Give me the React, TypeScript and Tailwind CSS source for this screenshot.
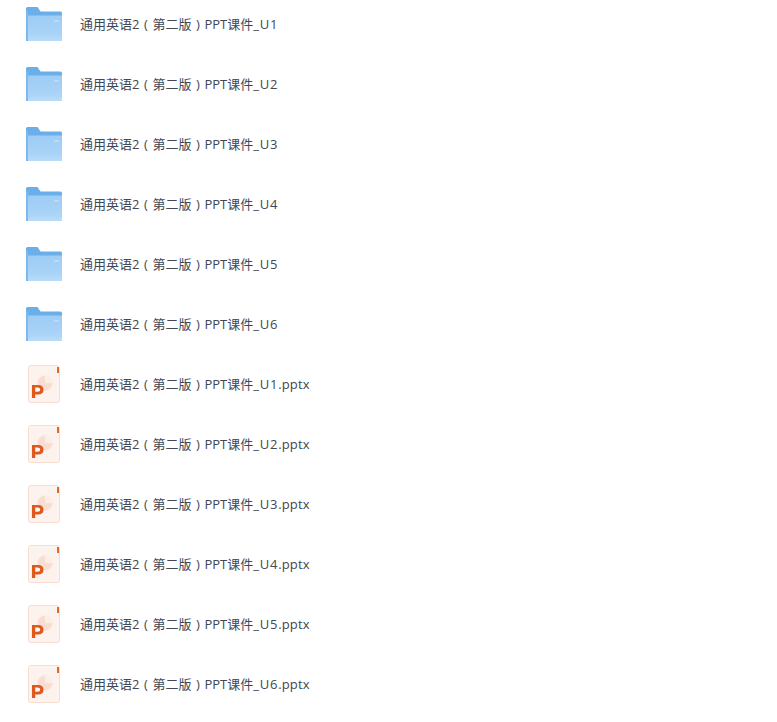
const folders = ['U1', 'U2', 'U3', 'U4', 'U5', 'U6'];

const FolderIcon = ({ id }: { id: string }) => (
  <svg width="36" height="34" viewBox="0 0 36 34" className="shrink-0">
    <defs>
      <linearGradient id={id} x1="0" y1="0" x2="0" y2="1">
        <stop offset="0" stopColor="#9dccf5" />
        <stop offset="0.7" stopColor="#a9d3f7" />
        <stop offset="1" stopColor="#b9dcf9" />
      </linearGradient>
    </defs>
    <path d="M0 1.5Q0 0 1.5 0H11.5L14.5 4.5H34.5Q36 4.5 36 6V12H0Z" fill="#6aaeea" />
    <path d="M0 4H2V34H0Z" fill="#7db9ee" />
    <path d="M2 8.5H36V34H2Z" fill={`url(#${id})`} />
    <path d="M28 13.5H33V14.5H28Z" fill="#d3e9fb" />
  </svg>
);

const PptIcon = () => (
  <svg width="36" height="38" viewBox="0 0 36 38" className="shrink-0">
    <rect x="2.5" y="0.5" width="31" height="37" rx="2.5" fill="#fdf3ee" stroke="#f6ddd0" />
    <rect x="31" y="2" width="2" height="6" fill="#de6a2c" />
    <circle cx="19" cy="18" r="7.5" fill="#f8ddd0" />
    <path d="M19 10.5A7.5 7.5 0 0 1 26.5 18H19Z" fill="#fbeee7" />
    <path
      d="M6 33V20H12Q17.5 20 17.5 24.7Q17.5 29.4 12 29.4H9.2V33ZM9.2 26.8H11.6Q14.3 26.8 14.3 24.7Q14.3 22.6 11.6 22.6H9.2Z"
      fill="#dc5a1e"
      fillRule="evenodd"
    />
  </svg>
);

// the fullwidth brackets sit centred in their cell in the reference
const Paren = ({ c }: { c: string }) => (
  <span className="inline-block w-[13px] text-center">{c}</span>
);

const Row = ({ icon, unit, ext }: { icon: React.ReactNode; unit: string; ext?: string }) => (
  <div className="flex h-[34px] items-center">
    <div className="flex w-[36px] justify-center">{icon}</div>
    <span className="ml-[18px] text-[13px] leading-[18px] text-[#404855]">
      通用英语2<Paren c="(" />第二版<Paren c=")" />PPT课件
      <span className="tracking-[0.8px]">_{unit}</span>
      {ext && <span className="tracking-[0.1px]">{ext}</span>}
    </span>
  </div>
);

export default function App() {
  return (
    <div
      className="flex h-[722px] w-[777px] flex-col gap-[26px] overflow-hidden bg-white pt-[7px] pl-[26px]"
      style={{ fontFamily: '"Open Sans", "Noto Sans CJK SC", sans-serif' }}
    >
      {folders.map(u => (
        <Row key={u} icon={<FolderIcon id={`folder-${u}`} />} unit={u} />
      ))}
      {folders.map(u => (
        <Row key={u} icon={<PptIcon />} unit={u} ext=".pptx" />
      ))}
    </div>
  );
}
